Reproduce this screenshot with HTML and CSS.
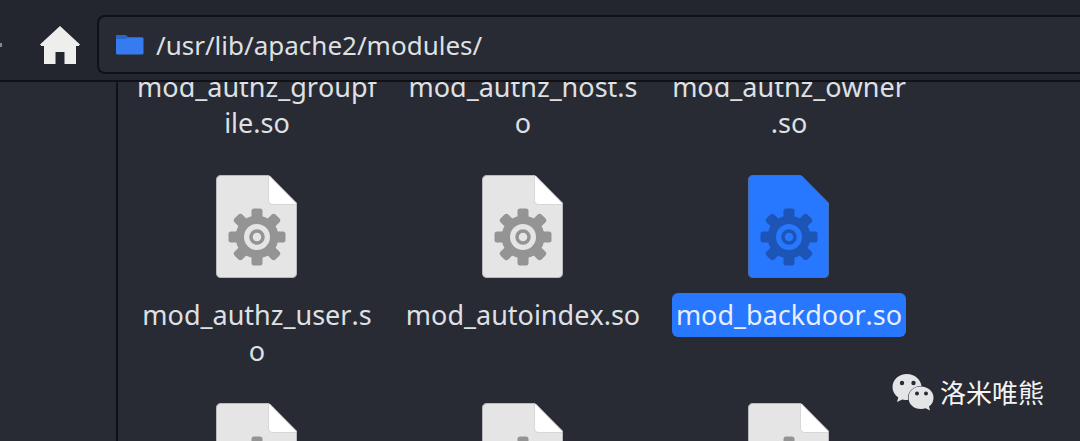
FILE: index.html
```html
<!DOCTYPE html>
<html lang="en">
<head>
<meta charset="utf-8">
<title>modules</title>
<link rel="stylesheet" href="styles.css">
</head>
<body>
<svg class="defs" aria-hidden="true">
  <symbol id="gear" viewBox="0 0 58 58">
    <g fill="currentColor">
      <rect x="23.500" y="0.500" width="11" height="57" rx="2.500"/>
      <rect x="0.500" y="23.500" width="57" height="11" rx="2.500"/>
      <g transform="rotate(45 29 29)">
        <rect x="23.500" y="0" width="11" height="58" rx="3"/>
        <rect x="0" y="23.500" width="58" height="11" rx="3"/>
      </g>
      <circle cx="29" cy="29" r="21.500"/>
    </g>
    <circle cx="29" cy="29" r="13" class="gear-hole"/>
    <circle cx="29" cy="29" r="6" fill="none" stroke="currentColor" stroke-width="3.500"/>
  </symbol>
  <symbol id="file" viewBox="0 0 82 103">
    <path class="sheet" d="M5 .5H53L80.500 28V98Q80.500 102.500 76 102.500H5Q.5 102.500 .5 98V5Q.5 .5 5 .5Z"/>
    <path class="fold-shade" d="M52 1V25Q52 29 56 30H80V28L54 1Z"/>
    <path class="fold" d="M53 1L80.500 29H57Q53 29 53 25Z"/>
    <use href="#gear" x="12" y="33" width="58" height="58"/>
  </symbol>
</svg>
<div class="window">
  <header class="toolbar">
    <span class="nav-edge"></span>
    <button class="home" type="button" aria-label="Home">
      <svg viewBox="0 0 40 38" width="40" height="38"><path d="M20 0L40 18.500L38.500 20H36V38H24.500V26H15.500V38H4V20H1.500L0 18.500Z"/></svg>
    </button>
    <label class="path">
      <svg viewBox="0 0 28 20" width="28" height="20" aria-hidden="true">
        <path fill="#2a66cc" d="M1 0H10L12 2H26Q27 2 27 3V8H0V1Q0 0 1 0Z"/>
        <path fill="#367bf0" d="M0 4H10L12 3H27.500V18.500Q27.500 19.500 26.500 19.500H1Q0 19.500 0 18.500Z"/>
      </svg>
      <input type="text" value="/usr/lib/apache2/modules/" aria-label="Location">
    </label>
  </header>
  <div class="body">
    <aside class="sidebar"></aside>
    <main class="files">
      <div class="item"><span class="name">mod_authz_groupf<br>ile.so</span></div>
      <div class="item"><span class="name">mod_authz_host.s<br>o</span></div>
      <div class="item"><span class="name">mod_authz_owner<br>.so</span></div>
      <div class="item"><svg class="icon"><use href="#file"/></svg><span class="name">mod_authz_user.s<br>o</span></div>
      <div class="item"><svg class="icon"><use href="#file"/></svg><span class="name">mod_autoindex.so</span></div>
      <div class="item selected"><svg class="icon"><use href="#file"/></svg><span class="name">mod_backdoor.so</span></div>
      <div class="item"><svg class="icon"><use href="#file"/></svg></div>
      <div class="item"><svg class="icon"><use href="#file"/></svg></div>
      <div class="item"><svg class="icon"><use href="#file"/></svg></div>
    </main>
  </div>
  <div class="watermark" lang="zh">
    <svg viewBox="0 0 42 38" width="42" height="38" aria-hidden="true">
      <path fill="#e4e5e7" d="M15 1C6.700 1 .5 6.800 .5 14.200C.5 18.500 2.800 22 6.300 24.500L5 29L10.300 26.400C12 26.900 14 27 16 27A13 12 0 0 1 29.500 13C28.500 6 22.500 1 15 1Z"/>
      <path fill="#e4e5e7" d="M29 13.500C21.700 13.500 16.500 18.300 16.500 24.700S21.700 36 29 36C30.700 36 32.200 35.800 33.700 35.300L38 37.500L37 33.500C40 31.300 41.500 28.300 41.500 24.700C41.500 18.500 36 13.500 29 13.500Z"/>
      <g fill="#282a34"><circle cx="10" cy="10" r="2.200"/><circle cx="21.500" cy="10" r="2.200"/><circle cx="25" cy="20.500" r="2"/><circle cx="34" cy="20.500" r="2"/></g>
    </svg>
    <span>洛米唯熊</span>
  </div>
</div>
</body>
</html>
```
FILE: styles.css
```css
* { box-sizing: border-box; }

body {
  margin: 0;
  background: #282a34;
  color: #dfe0e3;
  font: 27px/36px "Noto Sans", sans-serif;
  font-kerning: none;
}

.defs { position: absolute; width: 0; height: 0; }

.window {
  display: flex;
  flex-direction: column;
  height: 100vh;
  overflow: hidden;
}

.toolbar {
  display: flex;
  align-items: center;
  flex: none;
  padding: 15px 0 6px;
  background: #23262e;
  border-bottom: 2px solid #101116;
}

.nav-edge { width: 2px; height: 4px; background: #85878b; }

.home {
  display: flex;
  margin: 0 17px 0 38px;
  padding: 0;
  border: 0;
  background: none;
}
.home path { fill: #eeeeec; }

.path {
  display: flex;
  flex: 1;
  align-items: center;
  gap: 12px;
  height: 59px;
  padding-left: 17px;
  border: 2px solid #101116;
  border-right: 0;
  border-radius: 8px 0 0 8px;
  background: #282a34;
}
.path input {
  flex: 1;
  min-width: 0;
  padding: 0;
  border: 0;
  outline: 0;
  background: none;
  color: inherit;
  font: inherit;
  font-size: 26px;
}

.body { display: flex; flex: 1; min-height: 0; }
.sidebar { flex: none; width: 118px; border-right: 2px solid #101116; }

.files {
  display: grid;
  flex: 1;
  grid-template-columns: repeat(auto-fill, 266px);
  grid-template-rows: 106px 228px 228px;
  overflow: hidden;
  margin-top: -13px;
  padding-left: 6px;
  clip-path: inset(13px 0 0 0);
}

.item {
  display: flex;
  flex-direction: column;
  align-items: center;
  color: #949494;
}
.icon { flex: none; width: 82px; height: 103px; margin-bottom: 15px; }
.name {
  padding: 4px;
  border-radius: 6px;
  color: #dfe0e3;
  text-align: center;
}
.item:nth-child(-n+3) .name { padding-top: 0; }

.sheet { fill: var(--sheet, #e5e5e5); stroke: var(--edge, #b9babd); }
.gear-hole { fill: var(--sheet, #e5e5e5); }
.fold { fill: var(--fold, #fff); }
.fold-shade { fill: var(--shade, #d7d7d7); }

.selected {
  --sheet: #2777ff;
  --edge: #466fae;
  --fold: #2777ff;
  --shade: #2777ff;
  color: #1c55b5;
}
.selected .name { background: #2777ff; color: #e6eeff; }

.watermark {
  position: absolute;
  right: 36px;
  bottom: 30px;
  display: flex;
  align-items: center;
  gap: 6px;
  color: #f4f4f4;
  font: 26px/38px "Noto Sans CJK SC", sans-serif;
}
```
